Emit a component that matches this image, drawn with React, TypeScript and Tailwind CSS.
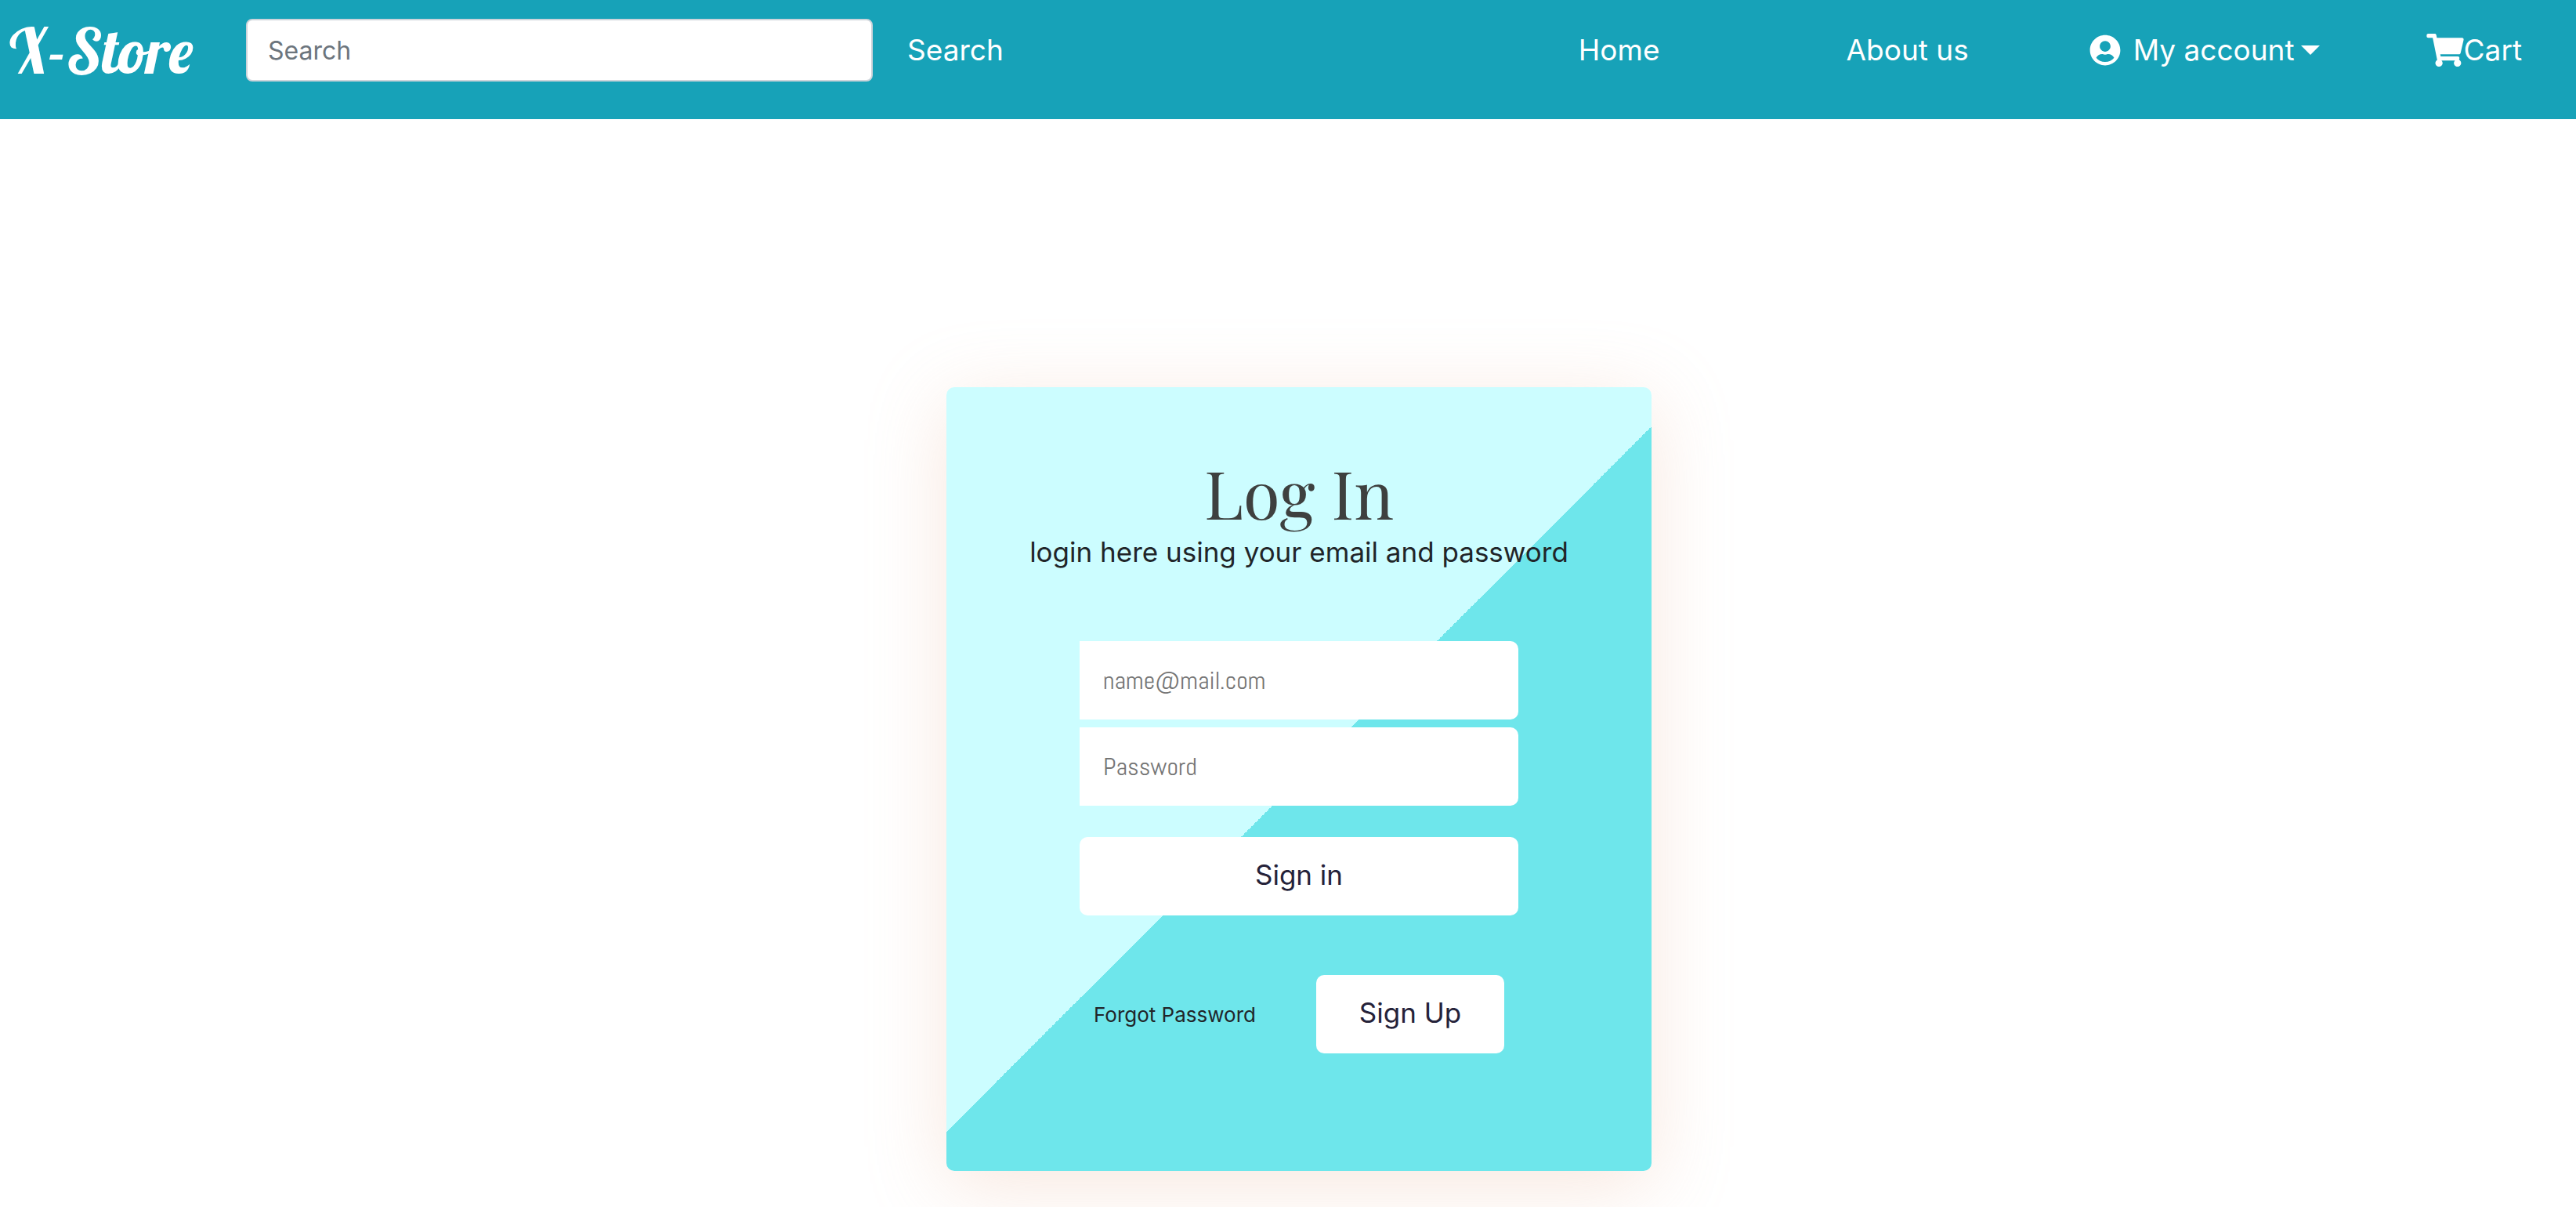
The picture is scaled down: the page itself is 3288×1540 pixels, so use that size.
import { FaShoppingCart, FaUserCircle } from "react-icons/fa";

function NavBar() {
  return (
    <header className="flex h-[152px] items-start bg-[#17a2b8] pl-3 pr-[69px] pt-6 text-[37px] text-white">
      <a
        href="#"
        className="flex h-20 w-[302px] shrink-0 items-center font-[Lobster,'Liberation_Serif',serif] text-[80px] leading-none"
      >
        X-Store
      </a>
      <form className="flex h-20 items-center" onSubmit={(e) => e.preventDefault()}>
        <input
          type="search"
          aria-label="Search"
          placeholder="Search"
          className="h-20 w-[800px] rounded-lg border-2 border-[#ced4da] bg-white px-[26px] text-[32px] text-[#495057] placeholder:text-[#6c757d]"
        />
        <button type="submit" className="ml-11">
          Search
        </button>
      </form>
      <nav className="ml-auto flex h-20 items-center whitespace-nowrap">
        <a href="#">Home</a>
        <a href="#" className="ml-[238px]">
          About us
        </a>
        <button type="button" className="ml-[154px] flex items-center">
          <FaUserCircle className="size-10" />
          <span className="ml-4">My account</span>
          <svg viewBox="0 0 24 12" className="ml-2 h-3 w-6" fill="currentColor" aria-hidden="true">
            <path d="M0 0h24L12 12z" />
          </svg>
        </button>
        <a href="#" className="ml-[136px] flex items-center">
          <FaShoppingCart className="h-[42px] w-12" />
          Cart
        </a>
      </nav>
    </header>
  );
}

function LoginCard() {
  return (
    <section className="flex w-[900px] flex-col items-center rounded-[10px] bg-[linear-gradient(135deg,#ccfdff_50%,#6ee6eb_50%)] pb-[150px] pt-[90px] text-[#212529] shadow-[0_18px_100px_hsla(20,67%,75%,0.31)]">
      <h1 className="font-['Playfair_Display','Liberation_Serif',serif] text-[85px] leading-[88px] text-[#3e403f]">
        Log In
      </h1>
      <p className="mt-2 whitespace-nowrap text-[35px] leading-[48px]">login here using your email and password</p>
      <form className="mt-[90px] flex w-[560px] flex-col" onSubmit={(e) => e.preventDefault()}>
        <input
          type="email"
          aria-label="Email"
          placeholder="name@mail.com"
          className="h-[100px] rounded-r-[10px] bg-white px-[30px] font-[Abel,'Liberation_Sans',sans-serif] text-[32px] placeholder:text-[#757575]"
        />
        <input
          type="password"
          aria-label="Password"
          placeholder="Password"
          className="mt-2.5 h-[100px] rounded-r-[10px] bg-white px-[30px] font-[Abel,'Liberation_Sans',sans-serif] text-[32px] placeholder:text-[#757575]"
        />
        <button type="submit" className="mt-10 h-[100px] rounded-[10px] bg-white pb-1 text-[35px] text-[#252239]">
          Sign in
        </button>
        <div className="mt-[76px] flex items-center justify-between px-[18px]">
          <a href="#" className="text-[26px]">
            Forgot Password
          </a>
          <button type="button" className="h-[100px] w-60 rounded-[10px] bg-white pb-1 text-[35px] text-[#252239]">
            Sign Up
          </button>
        </div>
      </form>
    </section>
  );
}

export default function App() {
  return (
    <div className="min-h-screen bg-white font-['Inter','Liberation_Sans',sans-serif]">
      <NavBar />
      <main className="flex justify-center pl-7 pt-[342px]">
        <LoginCard />
      </main>
    </div>
  );
}
